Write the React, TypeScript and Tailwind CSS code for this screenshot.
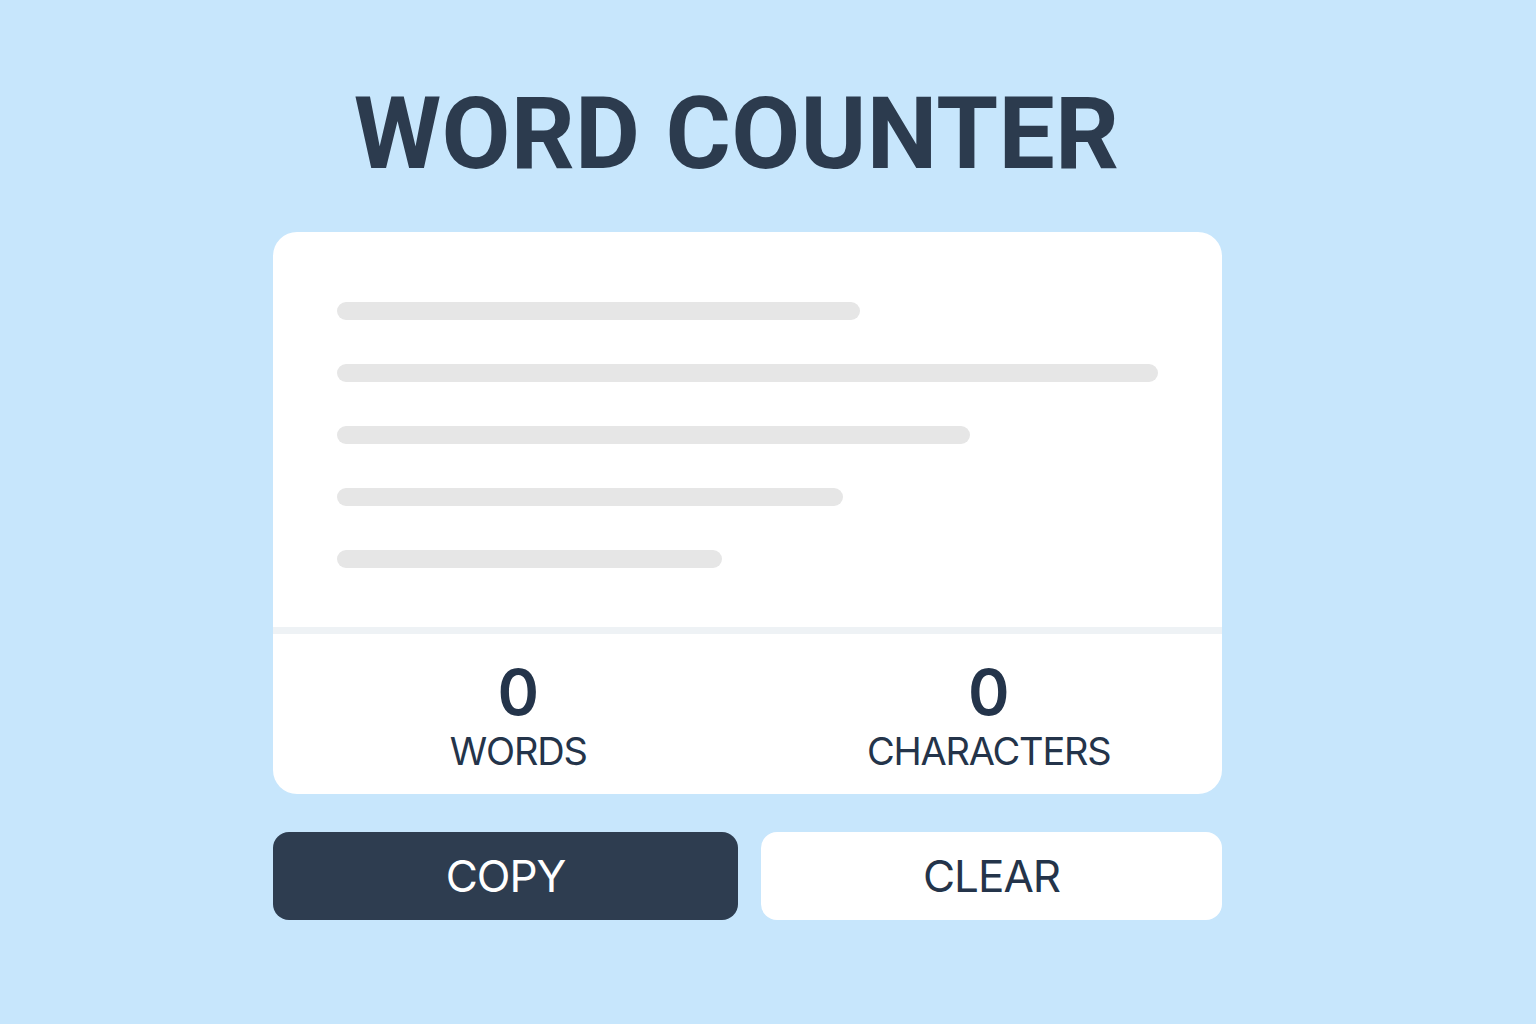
export default function App() {
  const lines = [523, 821, 633, 506, 385];
  return (
    <div
      className="min-h-[1024px] w-full bg-[#c7e6fc] flex flex-col items-center pr-[41px]"
      style={{ fontFamily: "Inter, 'Noto Sans', sans-serif" }}
    >
      <h1
        className="mt-[84px] mr-[22px] text-[100px] leading-none font-bold text-[#2c3b4e] tracking-[0.3px]"
        style={{ fontFamily: "Roboto, Inter, sans-serif" }}
      >
        WORD COUNTER
      </h1>

      <div className="mt-[48px] w-[949px] bg-white rounded-[24px] overflow-hidden">
        <div className="pt-[70px] pb-[59px] px-[64px] flex flex-col gap-[44px]">
          {lines.map((w, i) => (
            <div key={i} className="h-[18px] rounded-full bg-[#e6e6e6]" style={{ width: w }} />
          ))}
        </div>
        <div className="h-[7px] bg-[#eef2f5]" />
        <div className="grid grid-cols-2 pt-[27px] pb-[24px] text-[#24344a]">
          <div className="flex flex-col items-center pl-[16px]">
            <span className="text-[63px] leading-none font-semibold">0</span>
            <span className="mt-[8px] text-[38px] leading-none tracking-[-1.2px]">WORDS</span>
          </div>
          <div className="flex flex-col items-center pl-[8px]">
            <span className="text-[63px] leading-none font-semibold">0</span>
            <span className="mt-[8px] text-[38px] leading-none tracking-[-1.2px]">CHARACTERS</span>
          </div>
        </div>
      </div>

      <div className="mt-[38px] w-[949px] flex gap-[23px]">
        <button className="w-[465px] h-[88px] rounded-[16px] bg-[#2e3d50] text-white text-[44px] leading-none tracking-[-1px]">
          COPY
        </button>
        <button className="flex-1 h-[88px] rounded-[16px] bg-white text-[#24344a] text-[44px] leading-none tracking-[-1px]">
          CLEAR
        </button>
      </div>
    </div>
  );
}
